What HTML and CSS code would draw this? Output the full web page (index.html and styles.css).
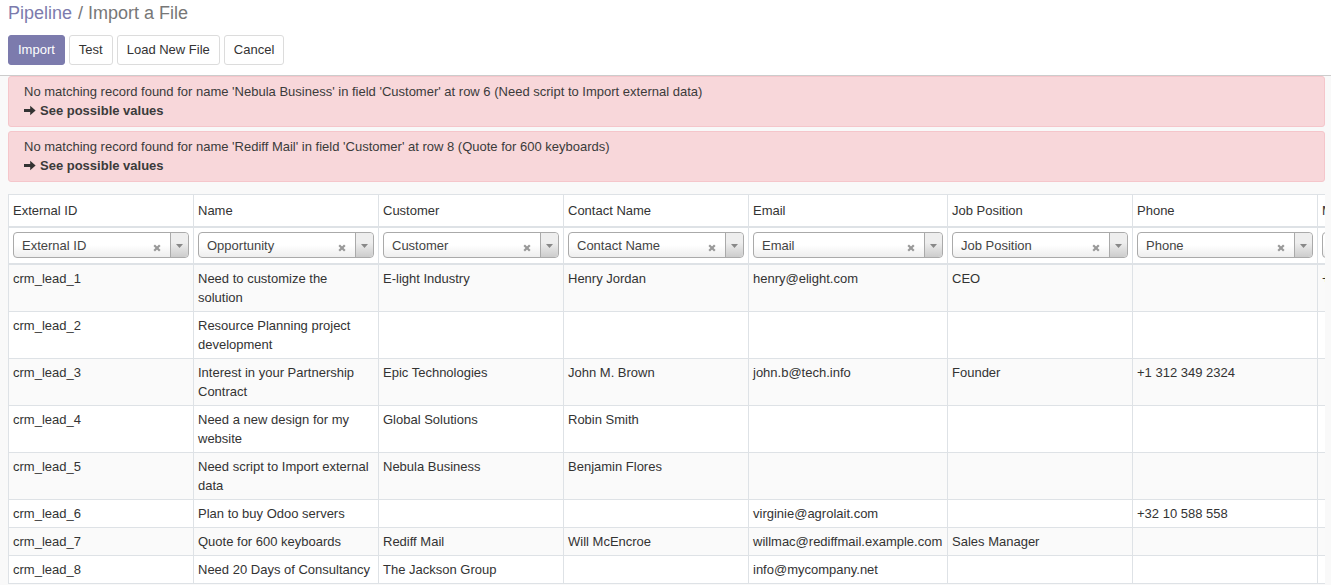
FILE: index.html
```html
<!DOCTYPE html>
<html>
<head>
<meta charset="utf-8">
<title>Import a File</title>
<link rel="stylesheet" href="styles.css">
</head>
<body>
<div class="control-panel">
  <div class="breadcrumb"><span class="bc-link">Pipeline</span><span class="bc-sep">/</span><span class="bc-active">Import a File</span></div>
  <div class="buttons">
    <button class="btn btn-primary">Import</button>
    <button class="btn">Test</button>
    <button class="btn">Load New File</button>
    <button class="btn">Cancel</button>
  </div>
</div>
<div class="content">
  <div class="alert">
    <div>No matching record found for name 'Nebula Business' in field 'Customer' at row 6 (Need script to Import external data)</div>
    <div class="more"><svg class="arrow" width="12" height="11" viewBox="0 0 12 11"><path d="M0 3.9h6.2V0.8L11.6 5.5 6.2 10.2V7.1H0z" fill="#333"/></svg>See possible values</div>
  </div>
  <div class="alert">
    <div>No matching record found for name 'Rediff Mail' in field 'Customer' at row 8 (Quote for 600 keyboards)</div>
    <div class="more"><svg class="arrow" width="12" height="11" viewBox="0 0 12 11"><path d="M0 3.9h6.2V0.8L11.6 5.5 6.2 10.2V7.1H0z" fill="#333"/></svg>See possible values</div>
  </div>
  <div class="table-wrap">
    <table class="preview">
      <colgroup>
        <col class="c185"><col class="c185"><col class="c185"><col class="c185"><col class="c199"><col class="c185"><col class="c185"><col class="c185">
      </colgroup>
      <thead>
        <tr class="heads">
          <th>External ID</th><th>Name</th><th>Customer</th><th>Contact Name</th><th>Email</th><th>Job Position</th><th>Phone</th><th>Mobile</th>
        </tr>
        <tr class="fields">
          <th><div class="s2"><span class="s2-label">External ID</span><svg class="s2-x" width="8" height="8" viewBox="0 0 8 8"><path d="M1.2 1.2L6.8 6.8M6.8 1.2L1.2 6.8" stroke="#999" stroke-width="2.2"/></svg><span class="s2-arrow"><svg width="7" height="4" viewBox="0 0 7 4"><path d="M0 0h7L3.5 4z" fill="#888"/></svg></span></div></th>
          <th><div class="s2"><span class="s2-label">Opportunity</span><svg class="s2-x" width="8" height="8" viewBox="0 0 8 8"><path d="M1.2 1.2L6.8 6.8M6.8 1.2L1.2 6.8" stroke="#999" stroke-width="2.2"/></svg><span class="s2-arrow"><svg width="7" height="4" viewBox="0 0 7 4"><path d="M0 0h7L3.5 4z" fill="#888"/></svg></span></div></th>
          <th><div class="s2"><span class="s2-label">Customer</span><svg class="s2-x" width="8" height="8" viewBox="0 0 8 8"><path d="M1.2 1.2L6.8 6.8M6.8 1.2L1.2 6.8" stroke="#999" stroke-width="2.2"/></svg><span class="s2-arrow"><svg width="7" height="4" viewBox="0 0 7 4"><path d="M0 0h7L3.5 4z" fill="#888"/></svg></span></div></th>
          <th><div class="s2"><span class="s2-label">Contact Name</span><svg class="s2-x" width="8" height="8" viewBox="0 0 8 8"><path d="M1.2 1.2L6.8 6.8M6.8 1.2L1.2 6.8" stroke="#999" stroke-width="2.2"/></svg><span class="s2-arrow"><svg width="7" height="4" viewBox="0 0 7 4"><path d="M0 0h7L3.5 4z" fill="#888"/></svg></span></div></th>
          <th><div class="s2"><span class="s2-label">Email</span><svg class="s2-x" width="8" height="8" viewBox="0 0 8 8"><path d="M1.2 1.2L6.8 6.8M6.8 1.2L1.2 6.8" stroke="#999" stroke-width="2.2"/></svg><span class="s2-arrow"><svg width="7" height="4" viewBox="0 0 7 4"><path d="M0 0h7L3.5 4z" fill="#888"/></svg></span></div></th>
          <th><div class="s2"><span class="s2-label">Job Position</span><svg class="s2-x" width="8" height="8" viewBox="0 0 8 8"><path d="M1.2 1.2L6.8 6.8M6.8 1.2L1.2 6.8" stroke="#999" stroke-width="2.2"/></svg><span class="s2-arrow"><svg width="7" height="4" viewBox="0 0 7 4"><path d="M0 0h7L3.5 4z" fill="#888"/></svg></span></div></th>
          <th><div class="s2"><span class="s2-label">Phone</span><svg class="s2-x" width="8" height="8" viewBox="0 0 8 8"><path d="M1.2 1.2L6.8 6.8M6.8 1.2L1.2 6.8" stroke="#999" stroke-width="2.2"/></svg><span class="s2-arrow"><svg width="7" height="4" viewBox="0 0 7 4"><path d="M0 0h7L3.5 4z" fill="#888"/></svg></span></div></th>
          <th><div class="s2"><span class="s2-label">Mobile</span><svg class="s2-x" width="8" height="8" viewBox="0 0 8 8"><path d="M1.2 1.2L6.8 6.8M6.8 1.2L1.2 6.8" stroke="#999" stroke-width="2.2"/></svg><span class="s2-arrow"><svg width="7" height="4" viewBox="0 0 7 4"><path d="M0 0h7L3.5 4z" fill="#888"/></svg></span></div></th>
        </tr>
      </thead>
      <tbody>
        <tr><td>crm_lead_1</td><td>Need to customize the solution</td><td>E-light Industry</td><td>Henry Jordan</td><td>henry@elight.com</td><td>CEO</td><td></td><td>+1 555 0101</td></tr>
        <tr><td>crm_lead_2</td><td>Resource Planning project development</td><td></td><td></td><td></td><td></td><td></td><td></td></tr>
        <tr><td>crm_lead_3</td><td>Interest in your Partnership Contract</td><td>Epic Technologies</td><td>John M. Brown</td><td>john.b@tech.info</td><td>Founder</td><td>+1 312 349 2324</td><td></td></tr>
        <tr><td>crm_lead_4</td><td>Need a new design for my website</td><td>Global Solutions</td><td>Robin Smith</td><td></td><td></td><td></td><td></td></tr>
        <tr><td>crm_lead_5</td><td>Need script to Import external data</td><td>Nebula Business</td><td>Benjamin Flores</td><td></td><td></td><td></td><td></td></tr>
        <tr><td>crm_lead_6</td><td>Plan to buy Odoo servers</td><td></td><td></td><td>virginie@agrolait.com</td><td></td><td>+32 10 588 558</td><td></td></tr>
        <tr><td>crm_lead_7</td><td>Quote for 600 keyboards</td><td>Rediff Mail</td><td>Will McEncroe</td><td>willmac@rediffmail.example.com</td><td>Sales Manager</td><td></td><td></td></tr>
        <tr><td>crm_lead_8</td><td>Need 20 Days of Consultancy</td><td>The Jackson Group</td><td></td><td>info@mycompany.net</td><td></td><td></td><td></td></tr>
      </tbody>
    </table>
  </div>
</div>
</body>
</html>
```
FILE: styles.css
```css
html, body {
  margin: 0;
  padding: 0;
}
body {
  font-family: "Liberation Sans", Arial, sans-serif;
  font-size: 13px;
  line-height: 19px;
  color: #4c4c4c;
  background: #f9f9f9;
  overflow: hidden;
}
.control-panel {
  background: #fff;
  border-bottom: 1px solid #cccccc;
  padding: 0 8px 10px;
}
.breadcrumb {
  font-size: 18px;
  line-height: 26px;
  height: 26px;
  margin-bottom: 9px;
}
.bc-link { color: #7c7bad; }
.bc-sep { color: #777; padding: 0 5px 0 6px; }
.bc-active { color: #777; }
.buttons {
  display: flex;
  gap: 3px;
}
.btn {
  font-family: inherit;
  font-size: 13px;
  line-height: 18px;
  height: 30px;
  padding: 5px 9px;
  background: #fff;
  color: #333;
  border: 1px solid #dcdcdc;
  border-radius: 3px;
  margin-right: 1px;
}
.btn-primary {
  background: #7c7bad;
  border-color: #7c7bad;
  color: #fff;
}
.content {
  padding: 0 6px 0 8px;
}
.alert {
  background: #f8d7da;
  border: 1px solid #f5c6cb;
  border-radius: 3px;
  padding: 5px 15px 6px;
  margin-bottom: 4px;
  color: #3b3b3b;
  height: 38px;
  box-sizing: content-box;
}
.more {
  font-weight: bold;
}
.arrow {
  vertical-align: -1px;
  margin-right: 4px;
}
.table-wrap {
  margin-top: 12px;
  overflow: hidden;
}
.preview {
  border-collapse: collapse;
  table-layout: fixed;
  width: 1494px;
  background: #fff;
}
.c185 { width: 185px; }
.c199 { width: 199px; }
.preview th, .preview td {
  border: 1px solid #dee2e6;
  padding: 4px;
  text-align: left;
  vertical-align: top;
  font-weight: normal;
  color: #333;
}
.heads th {
  padding: 6px 4px 6px;
  border-bottom-width: 2px;
}
.fields th {
  padding: 4px 4px 5px;
  border-bottom-width: 2px;
  line-height: 0;
}
.preview tbody tr:nth-child(odd) td {
  background: #fafafa;
}
.s2 {
  position: relative;
  height: 26px;
  box-sizing: border-box;
  border: 1px solid #aaa;
  border-radius: 4px;
  background: linear-gradient(to top, #eeeeee 0%, #ffffff 50%);
  display: flex;
  align-items: center;
  line-height: 19px;
}
.s2-label {
  flex: 1;
  padding-left: 8px;
  color: #444;
  white-space: nowrap;
  overflow: hidden;
}
.s2-x {
  margin: 5px 9px 0 0;
}
.s2-arrow {
  align-self: stretch;
  width: 17px;
  border-left: 1px solid #aaa;
  border-radius: 0 4px 4px 0;
  background: linear-gradient(to top, #cccccc 0%, #eeeeee 60%);
  display: flex;
  align-items: center;
  justify-content: center;
}
.s2-arrow svg { margin-top: 1px; }
```
